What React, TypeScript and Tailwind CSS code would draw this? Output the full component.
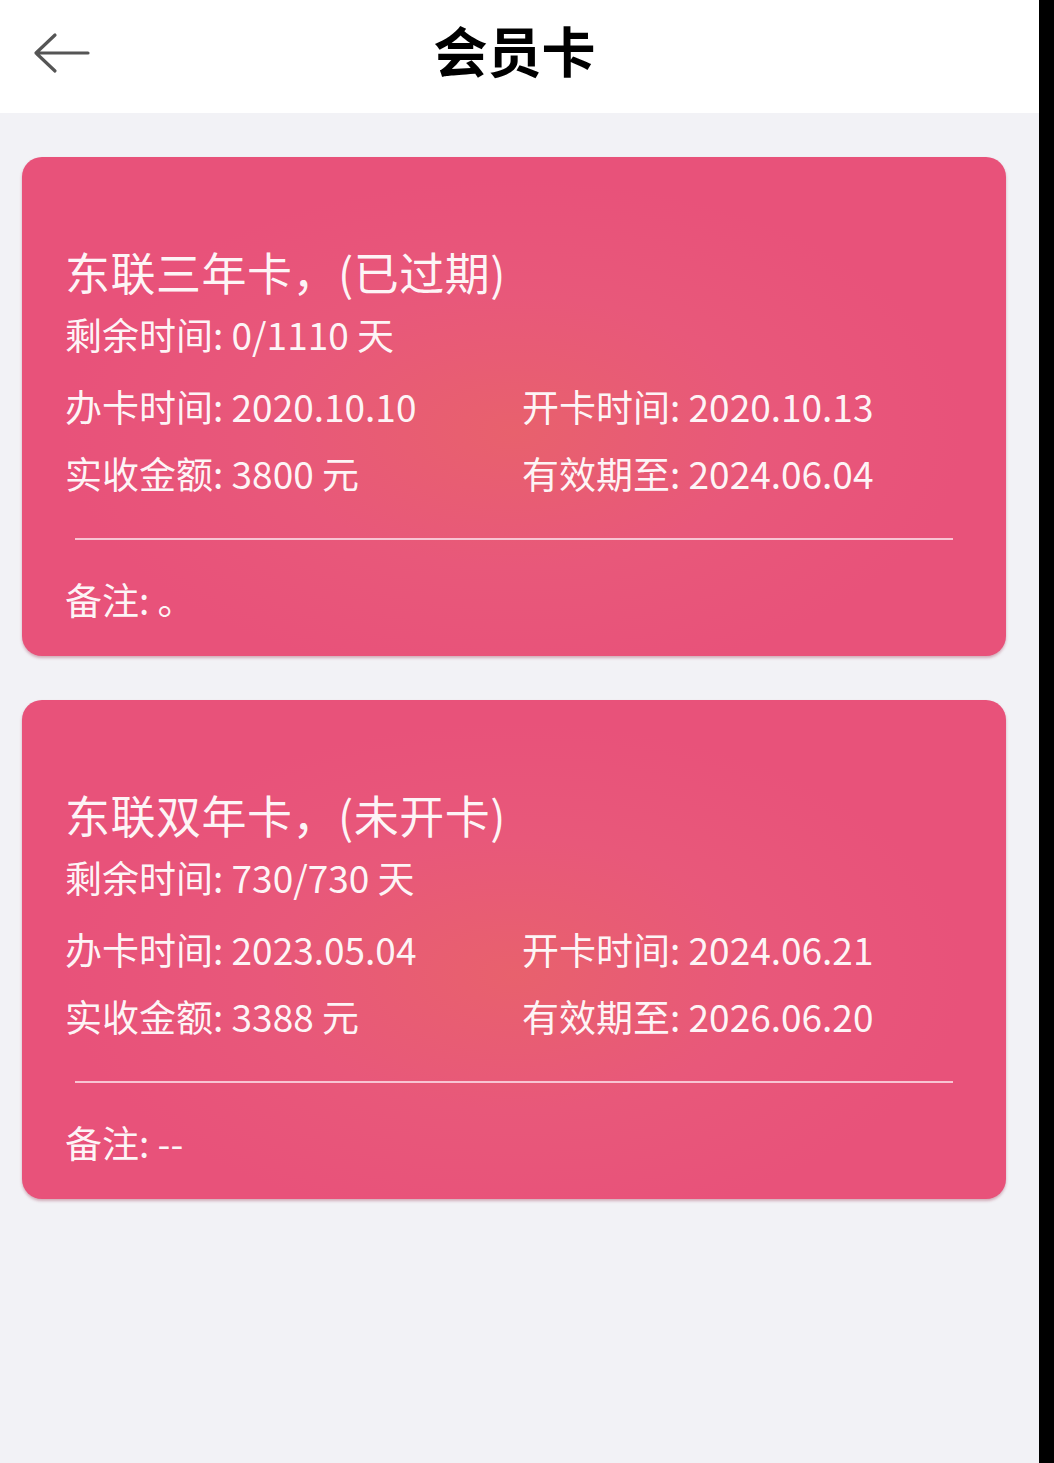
import React from "react";

type Card = {
  title: string;
  remain: string;
  handle: string;
  open: string;
  amount: string;
  expire: string;
  note: string;
};

const cards: Card[] = [
  {
    title: "东联三年卡，(已过期)",
    remain: "剩余时间: 0/1110 天",
    handle: "办卡时间: 2020.10.10",
    open: "开卡时间: 2020.10.13",
    amount: "实收金额: 3800 元",
    expire: "有效期至: 2024.06.04",
    note: "备注: 。",
  },
  {
    title: "东联双年卡，(未开卡)",
    remain: "剩余时间: 730/730 天",
    handle: "办卡时间: 2023.05.04",
    open: "开卡时间: 2024.06.21",
    amount: "实收金额: 3388 元",
    expire: "有效期至: 2026.06.20",
    note: "备注: --",
  },
];

function MemberCard({ c }: { c: Card }) {
  return (
    <div className="w-[984px] h-[499px] rounded-[20px] bg-[#e8527a] bg-[radial-gradient(ellipse_at_50%_55%,#e8616d_0%,#e8587a_35%,#e8527a_65%)] shadow-[0_2px_3px_rgba(150,40,70,0.35)] pl-[43px] pr-[44px] pt-[87px] text-white/95">
      <div className="text-[45px] leading-[56px] tracking-[0.5px]">{c.title}</div>
      <div className="mt-[10px] text-[37px] leading-[48px]">{c.remain}</div>
      <div className="mt-[24px] grid grid-cols-[457px_1fr] gap-y-[19px] text-[37px] leading-[48px]">
        <div>{c.handle}</div>
        <div>{c.open}</div>
        <div>{c.amount}</div>
        <div>{c.expire}</div>
      </div>
      <div className="mt-[41px] ml-[10px] mr-[9px] h-[2px] bg-[#f8c4d3]" />
      <div className="mt-[35px] text-[37px] leading-[48px]">{c.note}</div>
    </div>
  );
}

export default function App() {
  return (
    <div className="flex w-[1054px] min-h-[1463px] font-['Noto_Sans_CJK_SC','Noto_Sans',sans-serif]">
      <div className="w-[1039px] bg-[#f2f2f6] min-h-[1463px]">
        <div className="relative h-[113px] bg-white flex items-center justify-center pb-[14px]">
          <svg
            className="absolute left-[30px] top-[28px]"
            width="64"
            height="50"
            viewBox="0 0 64 50"
            fill="none"
          >
            <path
              d="M58 25 H6 M25 7 L6 25 L25 43"
              stroke="#555555"
              strokeWidth="3.2"
              strokeLinecap="round"
              strokeLinejoin="round"
            />
          </svg>
          <div className="ml-[-10px] text-[54px] leading-[60px] font-bold text-black">
            会员卡
          </div>
        </div>
        <div className="pl-[22px] pt-[44px] flex flex-col gap-[44px]">
          {cards.map((c, i) => (
            <MemberCard key={i} c={c} />
          ))}
        </div>
      </div>
      <div className="w-[15px] bg-black min-h-[1463px]" />
    </div>
  );
}
